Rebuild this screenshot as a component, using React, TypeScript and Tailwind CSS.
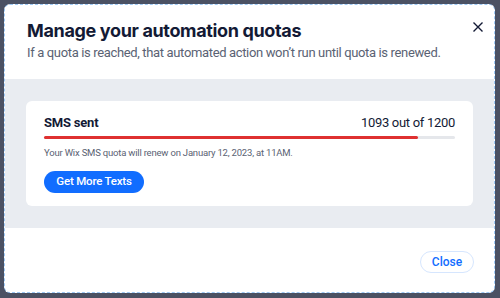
import React from "react";

const used = 1093;
const total = 1200;

export default function App() {
  const pct = (used / total) * 100;
  return (
    <div
      className="w-[500px] h-[298px] bg-[#4b5163] p-[4px] pb-[5px] overflow-hidden"
      style={{ fontFamily: "Roboto, 'Noto Sans', sans-serif" }}
    >
      <div className="h-full w-[491px] bg-white rounded-[6px] border border-dashed border-[#9cc8f5] flex flex-col overflow-hidden">
        <div className="flex justify-between pl-[22px] pr-[11px] pt-[14px]">
          <div>
            <h1
              className="text-[18px] leading-[24px] font-bold text-[#131a35] tracking-[-0.35px]"
              style={{ fontFamily: "Inter, sans-serif" }}
            >
              Manage your automation quotas
            </h1>
            <p className="text-[13px] leading-[18px] text-[#5a6273] mt-[1px] tracking-[-0.35px]">
              If a quota is reached, that automated action won’t run until quota is renewed.
            </p>
          </div>
          <svg width="10" height="10" viewBox="0 0 10 10" className="mt-[3px]">
            <path d="M0.5 0.5L9.5 9.5M9.5 0.5L0.5 9.5" stroke="#131a35" strokeWidth="1.4" />
          </svg>
        </div>
        <div className="mt-[17px] bg-[#e9ecf1] px-[21px] pt-[22px] pb-[22px]">
          <div className="bg-white rounded-[6px] px-[18px] pt-[13px] pb-[13px]">
            <div className="flex justify-between items-center h-[18px]">
              <span className="text-[13px] font-bold text-[#131a35] tracking-[-0.2px]">SMS sent</span>
              <span className="text-[13px] text-[#131a35] tracking-[-0.3px]">
                {used} out of {total}
              </span>
            </div>
            <div className="mt-[4px] h-[3px] bg-[#e5e7eb] rounded-full">
              <div className="h-full bg-[#df3131] rounded-full" style={{ width: `${pct}%` }} />
            </div>
            <p className="mt-[7px] text-[9.5px] leading-[14px] text-[#5a6273] tracking-[-0.2px]">
              Your Wix SMS quota will renew on January 12, 2023, at 11AM.
            </p>
            <button className="mt-[11px] h-[22px] w-[100px] rounded-full bg-[#116dff] text-white text-[11.5px] font-medium tracking-[-0.2px]">
              Get More Texts
            </button>
          </div>
        </div>
        <div className="flex-1 flex items-center justify-end pr-[20px] pt-[3px]">
          <button className="h-[22px] w-[54px] rounded-full border border-[#d6e6fe] text-[#116dff] text-[12px] font-medium">
            Close
          </button>
        </div>
      </div>
    </div>
  );
}
